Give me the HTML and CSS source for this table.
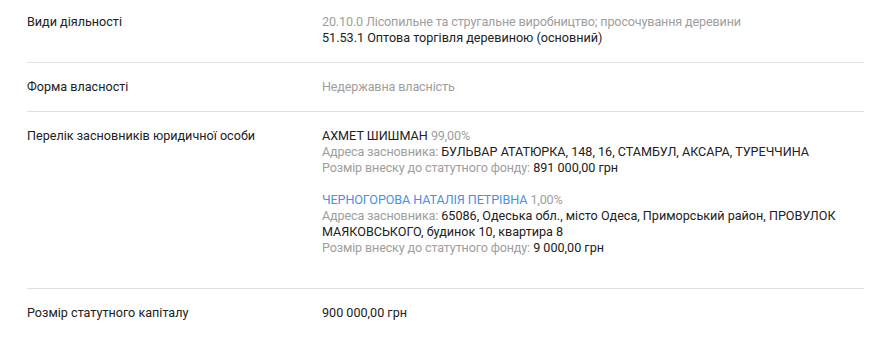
FILE: index.html
```html
<!DOCTYPE html>
<html lang="uk">
<head>
<meta charset="utf-8">
<link rel="stylesheet" href="styles.css">
</head>
<body>
<div class="table">
  <div class="row first">
    <div class="label">Види діяльності</div>
    <div class="value">
      <div class="muted">20.10.0 Лісопильне та стругальне виробництво; просочування деревини</div>
      <div>51.53.1 Оптова торгівля деревиною (основний)</div>
    </div>
  </div>
  <div class="row">
    <div class="label">Форма власності</div>
    <div class="value"><div class="muted">Недержавна власність</div></div>
  </div>
  <div class="row">
    <div class="label">Перелік засновників юридичної особи</div>
    <div class="value">
      <div class="founder">
        <div>АХМЕТ ШИШМАН <span class="muted">99,00%</span></div>
        <div><span class="muted">Адреса засновника:</span> БУЛЬВАР АТАТЮРКА, 148, 16, СТАМБУЛ, АКСАРА, ТУРЕЧЧИНА</div>
        <div><span class="muted">Розмір внеску до статутного фонду:</span> 891 000,00 грн</div>
      </div>
      <div class="founder">
        <div><a class="link" href="#">ЧЕРНОГОРОВА НАТАЛІЯ ПЕТРІВНА</a> <span class="muted">1,00%</span></div>
        <div><span class="muted">Адреса засновника:</span> 65086, Одеська обл., місто Одеса, Приморський район, ПРОВУЛОК МАЯКОВСЬКОГО, будинок 10, квартира 8</div>
        <div><span class="muted">Розмір внеску до статутного фонду:</span> 9 000,00 грн</div>
      </div>
    </div>
  </div>
  <div class="row">
    <div class="label">Розмір статутного капіталу</div>
    <div class="value"><div>900 000,00 грн</div></div>
  </div>
</div>
</body>
</html>
```
FILE: styles.css
```css
html, body {
  margin: 0;
  padding: 0;
  background: #fff;
}
body {
  font-family: Roboto, "Liberation Sans", sans-serif;
  font-size: 12.6px;
  line-height: 16px;
  color: #212121;
}
.table {
  margin: 0 27px;
  width: 837px;
}
.row {
  display: flex;
  padding: 16px 0 16px;
  border-top: 1px solid #e0e0e0;
}
.row.first {
  border-top: none;
  padding-top: 14px;
}
.label {
  width: 295px;
  flex: none;
}
.value {
  flex: 1;
  max-width: 525px;
}
.muted {
  color: #9e9e9e;
  letter-spacing: -0.15px;
}
.founder {
  margin-bottom: 16px;
}
.link {
  color: #4a90e2;
  text-decoration: none;
  letter-spacing: -0.1px;
}
```
